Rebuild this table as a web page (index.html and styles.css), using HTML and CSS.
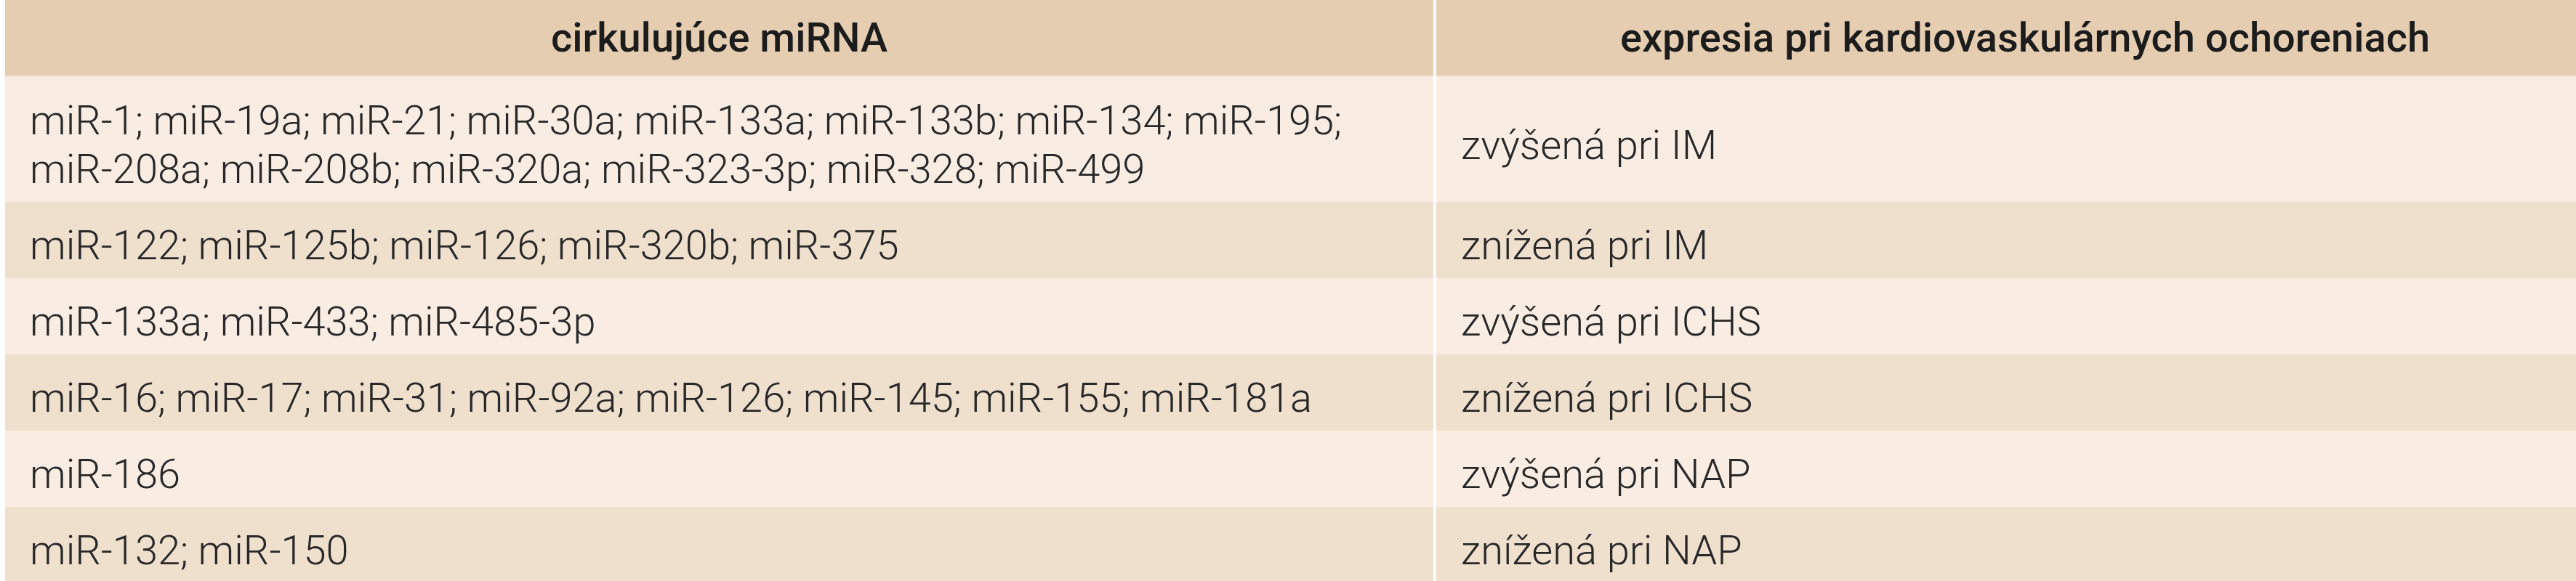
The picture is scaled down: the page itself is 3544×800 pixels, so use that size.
FILE: index.html
```html
<!DOCTYPE html>
<html lang="sk">
<head>
<meta charset="utf-8">
<title>cirkulujúce miRNA</title>
<link rel="stylesheet" href="styles.css">
</head>
<body>
<table class="mirna">
  <colgroup>
    <col class="c1">
    <col class="c2">
  </colgroup>
  <thead>
    <tr>
      <th>cirkulujúce miRNA</th>
      <th>expresia pri kardiovaskulárnych ochoreniach</th>
    </tr>
  </thead>
  <tbody>
    <tr>
      <td>miR-1; miR-19a; miR-21; miR-30a; miR-133a; miR-133b; miR-134; miR-195;<br>miR-208a; miR-208b; miR-320a; miR-323-3p; miR-328; miR-499</td>
      <td>zvýšená pri IM</td>
    </tr>
    <tr>
      <td>miR-122; miR-125b; miR-126; miR-320b; miR-375</td>
      <td>znížená pri IM</td>
    </tr>
    <tr>
      <td>miR-133a; miR-433; miR-485-3p</td>
      <td>zvýšená pri ICHS</td>
    </tr>
    <tr>
      <td>miR-16; miR-17; miR-31; miR-92a; miR-126; miR-145; miR-155; miR-181a</td>
      <td>znížená pri ICHS</td>
    </tr>
    <tr>
      <td>miR-186</td>
      <td>zvýšená pri NAP</td>
    </tr>
    <tr>
      <td>miR-132; miR-150</td>
      <td>znížená pri NAP</td>
    </tr>
  </tbody>
</table>
</body>
</html>
```

FILE: styles.css
```css
html, body {
  margin: 0;
  padding: 0;
  background: #ffffff;
  overflow: hidden;
}
body {
  padding-left: 7px;
  font-family: Roboto, "Liberation Sans", sans-serif;
  color: #222222;
}
.mirna {
  border-collapse: collapse;
  table-layout: fixed;
  width: 3589px;
  font-size: 56px;
  line-height: 67px;
}
.c1 { width: 1967px; }
.mirna th,
.mirna td {
  text-align: left;
  vertical-align: middle;
  border-left: 4px solid #ffffff;
  white-space: nowrap;
}
.mirna th:first-child,
.mirna td:first-child {
  border-left: 0;
}
.mirna th {
  padding: 19px 34px 18px;
  background: #e5cdb1;
  font-weight: 500;
  text-align: center;
  color: #1c1c1c;
}
.mirna td {
  padding: 27px 34px 11px;
  font-weight: 300;
  color: #282828;
}
.mirna tbody tr:nth-child(odd) td { background: #f9ede3; }
.mirna tbody tr:nth-child(even) td { background: #efdfcd; }
.mirna thead tr { border-bottom: 2px solid #f4e5d8; }
```
